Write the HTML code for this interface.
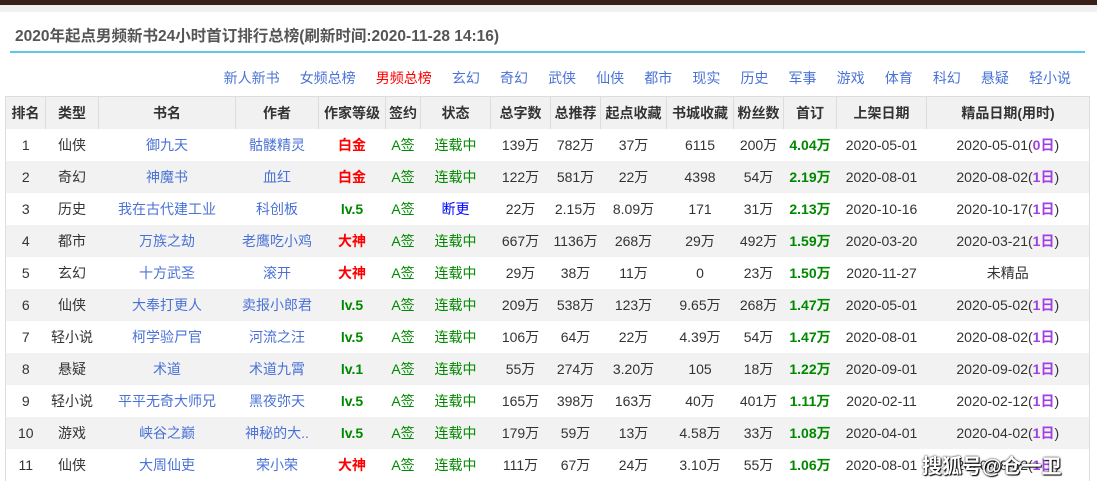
<!DOCTYPE html>
<html><head><meta charset="utf-8"><style>
body{margin:0;width:1097px;height:482px;overflow:hidden;background:#fff;font-family:"Liberation Sans","Noto Sans CJK SC",sans-serif;color:#333;position:relative}
.top{position:absolute;left:0;top:0;width:1097px;height:5px;background:#3a2016}
.gap{position:absolute;left:0;top:5px;width:1097px;height:7px;background:#f0f0f0}
.title{position:absolute;left:15px;top:24px;font-size:15.5px;font-weight:bold;color:#555}
.line{position:absolute;left:10px;top:51px;width:1075px;height:2px;background:#5cc8ec}
.nav{position:absolute;right:26px;top:68px;font-size:14px;color:#4a72d6;white-space:nowrap}
.nav span{margin-left:20.1px}
.nav .r{color:#f00}
table{position:absolute;left:5px;top:96px;border-collapse:collapse;font-size:14px;table-layout:fixed;width:1084px;border-left:1px solid #ddd;border-right:1px solid #ddd}
td,th{height:32px;padding:0;text-align:center;white-space:nowrap;overflow:hidden;line-height:32px;vertical-align:middle}
th{background:#f1f1f1;font-weight:bold;color:#333;border-right:1px solid #ddd;border-top:1px solid #ddd}
tr:nth-child(odd) td{background:#f2f2f2}
.b{color:#4a72d6}.rd{color:#f00;font-weight:bold}.g{color:#080}.gb{color:#080;font-weight:bold}.bl{color:#00f;font-weight:normal}.p{color:#a040e0;font-weight:bold}
.wm{position:absolute;left:922px;top:450px;font-size:20px;color:#fff;font-weight:bold;text-shadow:0 0 2px #000,1px 1px 1px #000}
</style></head><body>
<div class="top"></div><div class="gap"></div>
<div class="title">2020年起点男频新书24小时首订排行总榜(刷新时间:2020-11-28 14:16)</div>
<div class="line"></div>
<div class="nav"><span>新人新书</span><span>女频总榜</span><span class="r">男频总榜</span><span>玄幻</span><span>奇幻</span><span>武侠</span><span>仙侠</span><span>都市</span><span>现实</span><span>历史</span><span>军事</span><span>游戏</span><span>体育</span><span>科幻</span><span>悬疑</span><span>轻小说</span></div>
<table>
<colgroup><col style="width:40px"><col style="width:53px"><col style="width:137px"><col style="width:83px"><col style="width:67px"><col style="width:35px"><col style="width:70px"><col style="width:60px"><col style="width:50px"><col style="width:66px"><col style="width:67px"><col style="width:50px"><col style="width:53px"><col style="width:90px"><col style="width:163px"></colgroup>
<tr><th>排名</th><th>类型</th><th>书名</th><th>作者</th><th>作家等级</th><th>签约</th><th>状态</th><th>总字数</th><th>总推荐</th><th>起点收藏</th><th>书城收藏</th><th>粉丝数</th><th>首订</th><th>上架日期</th><th>精品日期(用时)</th></tr>
<tr><td>1</td><td>仙侠</td><td class="b">御九天</td><td class="b">骷髅精灵</td><td class="rd">白金</td><td class="g">A签</td><td class="g">连载中</td><td>139万</td><td>782万</td><td>37万</td><td>6115</td><td>200万</td><td class="gb">4.04万</td><td>2020-05-01</td><td>2020-05-01(<span class="p">0日</span>)</td></tr>
<tr><td>2</td><td>奇幻</td><td class="b">神魔书</td><td class="b">血红</td><td class="rd">白金</td><td class="g">A签</td><td class="g">连载中</td><td>122万</td><td>581万</td><td>22万</td><td>4398</td><td>54万</td><td class="gb">2.19万</td><td>2020-08-01</td><td>2020-08-02(<span class="p">1日</span>)</td></tr>
<tr><td>3</td><td>历史</td><td class="b">我在古代建工业</td><td class="b">科创板</td><td class="gb">lv.5</td><td class="g">A签</td><td class="bl">断更</td><td>22万</td><td>2.15万</td><td>8.09万</td><td>171</td><td>31万</td><td class="gb">2.13万</td><td>2020-10-16</td><td>2020-10-17(<span class="p">1日</span>)</td></tr>
<tr><td>4</td><td>都市</td><td class="b">万族之劫</td><td class="b">老鹰吃小鸡</td><td class="rd">大神</td><td class="g">A签</td><td class="g">连载中</td><td>667万</td><td>1136万</td><td>268万</td><td>29万</td><td>492万</td><td class="gb">1.59万</td><td>2020-03-20</td><td>2020-03-21(<span class="p">1日</span>)</td></tr>
<tr><td>5</td><td>玄幻</td><td class="b">十方武圣</td><td class="b">滚开</td><td class="rd">大神</td><td class="g">A签</td><td class="g">连载中</td><td>29万</td><td>38万</td><td>11万</td><td>0</td><td>23万</td><td class="gb">1.50万</td><td>2020-11-27</td><td>未精品</td></tr>
<tr><td>6</td><td>仙侠</td><td class="b">大奉打更人</td><td class="b">卖报小郎君</td><td class="gb">lv.5</td><td class="g">A签</td><td class="g">连载中</td><td>209万</td><td>538万</td><td>123万</td><td>9.65万</td><td>268万</td><td class="gb">1.47万</td><td>2020-05-01</td><td>2020-05-02(<span class="p">1日</span>)</td></tr>
<tr><td>7</td><td>轻小说</td><td class="b">柯学验尸官</td><td class="b">河流之汪</td><td class="gb">lv.5</td><td class="g">A签</td><td class="g">连载中</td><td>106万</td><td>64万</td><td>22万</td><td>4.39万</td><td>54万</td><td class="gb">1.47万</td><td>2020-08-01</td><td>2020-08-02(<span class="p">1日</span>)</td></tr>
<tr><td>8</td><td>悬疑</td><td class="b">术道</td><td class="b">术道九霄</td><td class="gb">lv.1</td><td class="g">A签</td><td class="g">连载中</td><td>55万</td><td>274万</td><td>3.20万</td><td>105</td><td>18万</td><td class="gb">1.22万</td><td>2020-09-01</td><td>2020-09-02(<span class="p">1日</span>)</td></tr>
<tr><td>9</td><td>轻小说</td><td class="b">平平无奇大师兄</td><td class="b">黑夜弥天</td><td class="gb">lv.5</td><td class="g">A签</td><td class="g">连载中</td><td>165万</td><td>398万</td><td>163万</td><td>40万</td><td>401万</td><td class="gb">1.11万</td><td>2020-02-11</td><td>2020-02-12(<span class="p">1日</span>)</td></tr>
<tr><td>10</td><td>游戏</td><td class="b">峡谷之巅</td><td class="b">神秘的大..</td><td class="gb">lv.5</td><td class="g">A签</td><td class="g">连载中</td><td>179万</td><td>59万</td><td>13万</td><td>4.58万</td><td>33万</td><td class="gb">1.08万</td><td>2020-04-01</td><td>2020-04-02(<span class="p">1日</span>)</td></tr>
<tr><td>11</td><td>仙侠</td><td class="b">大周仙吏</td><td class="b">荣小荣</td><td class="rd">大神</td><td class="g">A签</td><td class="g">连载中</td><td>111万</td><td>67万</td><td>24万</td><td>3.10万</td><td>55万</td><td class="gb">1.06万</td><td>2020-08-01</td><td>2020-08-02(<span class="p">1日</span>)</td></tr>
</table>
<div class="wm">搜狐号@仓一卫</div>
</body></html>
